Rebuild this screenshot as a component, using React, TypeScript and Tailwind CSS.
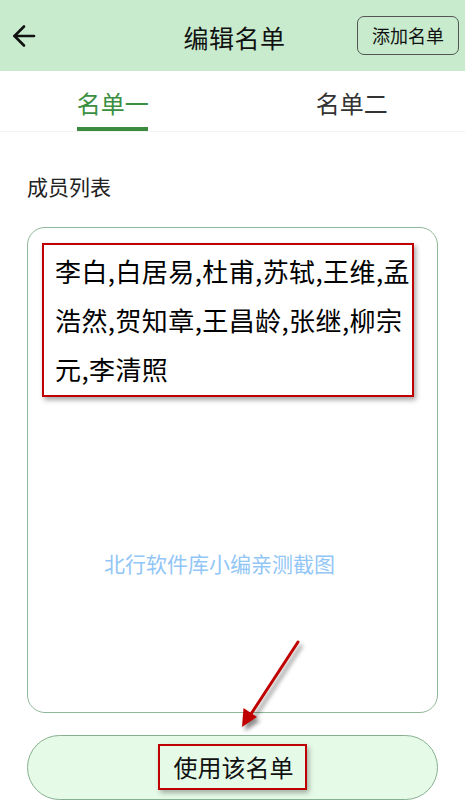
import React from "react";

const cjk = { fontFamily: '"Noto Sans CJK SC", "Noto Sans", sans-serif' };

function BackArrow() {
  return (
    <svg width="24" height="24" viewBox="0 0 24 24" fill="none" stroke="#111" strokeWidth="2.6" strokeLinecap="round" strokeLinejoin="round">
      <path d="M22 12H2.5" />
      <path d="M12 2.5L2.5 12L12 21.5" />
    </svg>
  );
}

function PointerArrow() {
  return (
    <svg
      className="absolute left-0 top-0 pointer-events-none drop-shadow-[3px_4px_2px_rgba(0,0,0,0.45)]"
      width="465"
      height="808"
      viewBox="0 0 465 808"
    >
      <line x1="298" y1="642" x2="251" y2="714" stroke="#c00000" strokeWidth="3" strokeLinecap="round" />
      <polygon points="242,727 243.5,708 257,717" fill="#c00000" />
    </svg>
  );
}

export default function App() {
  const lines = ["李白,白居易,杜甫,苏轼,王维,孟", "浩然,贺知章,王昌龄,张继,柳宗", "元,李清照"];
  return (
    <div className="relative w-[465px] h-[808px] bg-white overflow-hidden" style={cjk}>
      {/* top bar */}
      <div className="h-[71px] bg-[#c7ebcc] flex items-center justify-between pl-[12px] pr-[6px]">
        <div className="w-[100px] flex items-center pt-[1px]">
          <BackArrow />
        </div>
        <div className="text-[25px] leading-none text-[#111] tracking-[0.5px] pt-[4px]">编辑名单</div>
        <div className="w-[102px] h-[39px] border border-[#555] rounded-[7px] flex items-center justify-center text-[18px] text-[#111] mb-[1px]">
          添加名单
        </div>
      </div>

      {/* tabs */}
      <div className="grid grid-cols-2 h-[61px] border-b border-[#f3f3f3]">
        <div className="flex justify-center pr-[7px]">
          <div className="flex flex-col items-center justify-end">
            <div className="text-[24px] leading-none text-[#3b8f40] pb-[12px] px-[1px]">名单一</div>
            <div className="h-[4px] w-[71px] bg-[#3a8b3e]" />
          </div>
        </div>
        <div className="flex justify-center pl-[6px]">
          <div className="flex flex-col items-center justify-end">
            <div className="text-[24px] leading-none text-[#333] pb-[16px]">名单二</div>
          </div>
        </div>
      </div>

      <div className="px-[27px]">
        <div className="mt-[40px] text-[21px] leading-[28px] text-[#222]">成员列表</div>

        {/* member list field */}
        <div className="mt-[27px] h-[486px] border border-[#8fb898] rounded-[18px] pt-[15px] pl-[14px]">
          <div className="w-[372px] h-[154px] border-2 border-[#c00000] shadow-[2px_3px_5px_rgba(0,0,0,0.35)] pl-[11px] pt-[1px]">
            {lines.map((l) => (
              <div key={l} className="text-[26px] leading-[49px] text-black whitespace-nowrap tracking-[0.4px]">
                {l}
              </div>
            ))}
          </div>
        </div>

        {/* action button */}
        <div className="mt-[22px] h-[65px] rounded-full border border-[#86b090] bg-[#e6fbe7] flex items-center justify-center">
          <div className="w-[149px] h-[46px] border-2 border-[#c00000] shadow-[2px_3px_5px_rgba(0,0,0,0.3)] flex items-center justify-center text-[24px] text-[#111] pl-[2px] mb-[1px]">
            使用该名单
          </div>
        </div>
      </div>

      {/* watermark */}
      <div className="absolute left-[104px] top-[549px] text-[21px] leading-[28px] text-[#92c6f6] whitespace-nowrap">
        北行软件库小编亲测截图
      </div>

      <PointerArrow />
    </div>
  );
}
